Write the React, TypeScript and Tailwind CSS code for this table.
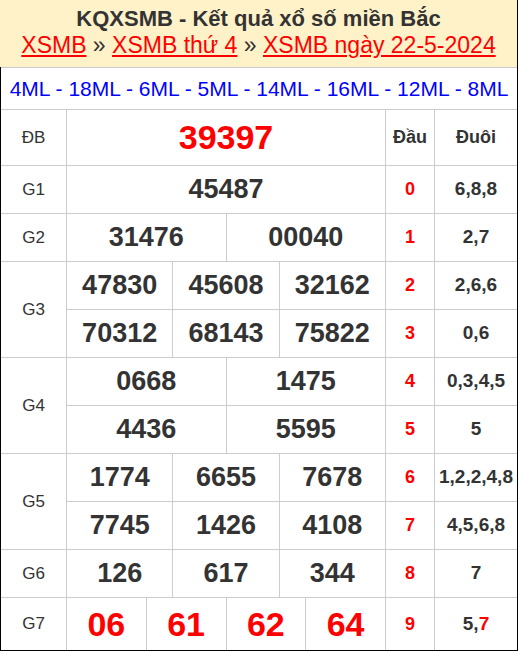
import React from 'react'

type Row = {
  label?: string
  labelSpan?: 1 | 2
  nums: string[]
  red?: boolean
  big?: boolean
  dau: React.ReactNode
  duoi: React.ReactNode
}

const spanClass: Record<number, string> = {
  1: 'col-span-12',
  2: 'col-span-6',
  3: 'col-span-4',
  4: 'col-span-3',
}

const rows: Row[] = [
  { label: 'G1', nums: ['45487'], dau: '0', duoi: '6,8,8' },
  { label: 'G2', nums: ['31476', '00040'], dau: '1', duoi: '2,7' },
  { label: 'G3', labelSpan: 2, nums: ['47830', '45608', '32162'], dau: '2', duoi: '2,6,6' },
  { nums: ['70312', '68143', '75822'], dau: '3', duoi: '0,6' },
  { label: 'G4', labelSpan: 2, nums: ['0668', '1475'], dau: '4', duoi: '0,3,4,5' },
  { nums: ['4436', '5595'], dau: '5', duoi: '5' },
  { label: 'G5', labelSpan: 2, nums: ['1774', '6655', '7678'], dau: '6', duoi: '1,2,2,4,8' },
  { nums: ['7745', '1426', '4108'], dau: '7', duoi: '4,5,6,8' },
  { label: 'G6', nums: ['126', '617', '344'], dau: '8', duoi: '7' },
  {
    label: 'G7',
    nums: ['06', '61', '62', '64'],
    red: true,
    big: true,
    dau: '9',
    duoi: (
      <>
        5,<span className="text-[#f00]">7</span>
      </>
    ),
  },
]

const mlList = ['4ML', '18ML', '6ML', '5ML', '14ML', '16ML', '12ML', '8ML']

export default function App() {
  return (
    <div className="h-[651px] w-[519px] bg-white font-['Liberation_Sans',Arial,sans-serif] text-[#333]">
      <div className="w-[518px]">
        {/* header */}
        <div className="flex h-[67px] flex-col items-center border-r border-black bg-[#fff2c8] pt-[6px]">
          <h1 className="text-[22px] font-bold leading-[26px]">KQXSMB - Kết quả xổ số miền Bắc</h1>
          <div className="text-[23px] leading-[27px] whitespace-nowrap">
            <a href="#" className="text-[#f00] underline">XSMB</a>
            {' » '}
            <a href="#" className="text-[#f00] underline">XSMB thứ 4</a>
            {' » '}
            <a href="#" className="text-[#f00] underline">XSMB ngày 22-5-2024</a>
          </div>
        </div>

        <div className="border-x border-b border-black">
          {/* ML row */}
          <div className="flex h-[42px] items-center justify-center border-t border-[#ccc] text-[21px] whitespace-pre text-[#00f]">
            <span>{mlList.join(' - ')}</span>
          </div>

          {/* results */}
          <div className="grid grid-cols-[65px_repeat(12,minmax(0,1fr))_48px_82px] grid-rows-[55px_repeat(9,47px)_52px] gap-px bg-[#ccc] pt-px">
            <div className="flex items-center justify-center bg-white text-[17px]">ĐB</div>
            <div className="col-span-12 flex items-center justify-center bg-white text-[34px] font-bold text-[#f00]">
              39397
            </div>
            <div className="flex items-center justify-center bg-white text-[18px] font-bold">Đầu</div>
            <div className="flex items-center justify-center bg-white text-[18px] font-bold">Đuôi</div>

            {rows.map((r, ri) => (
              <React.Fragment key={ri}>
                {r.label && (
                  <div
                    className={
                      'flex items-center justify-center bg-white text-[17px] ' +
                      (r.labelSpan === 2 ? 'row-span-2' : '')
                    }
                  >
                    {r.label}
                  </div>
                )}
                {r.nums.map((n, ni) => (
                  <div
                    key={ni}
                    className={
                      'flex items-center justify-center bg-white font-bold ' +
                      spanClass[r.nums.length] +
                      (r.big ? ' text-[34px]' : ' text-[27px]') +
                      (r.red ? ' text-[#f00]' : '')
                    }
                  >
                    {n}
                  </div>
                ))}
                <div className="flex items-center justify-center bg-white text-[18px] font-bold text-[#f00]">
                  {r.dau}
                </div>
                <div className="flex items-center justify-center bg-white text-[19px] font-bold">{r.duoi}</div>
              </React.Fragment>
            ))}
          </div>
        </div>
      </div>
    </div>
  )
}
